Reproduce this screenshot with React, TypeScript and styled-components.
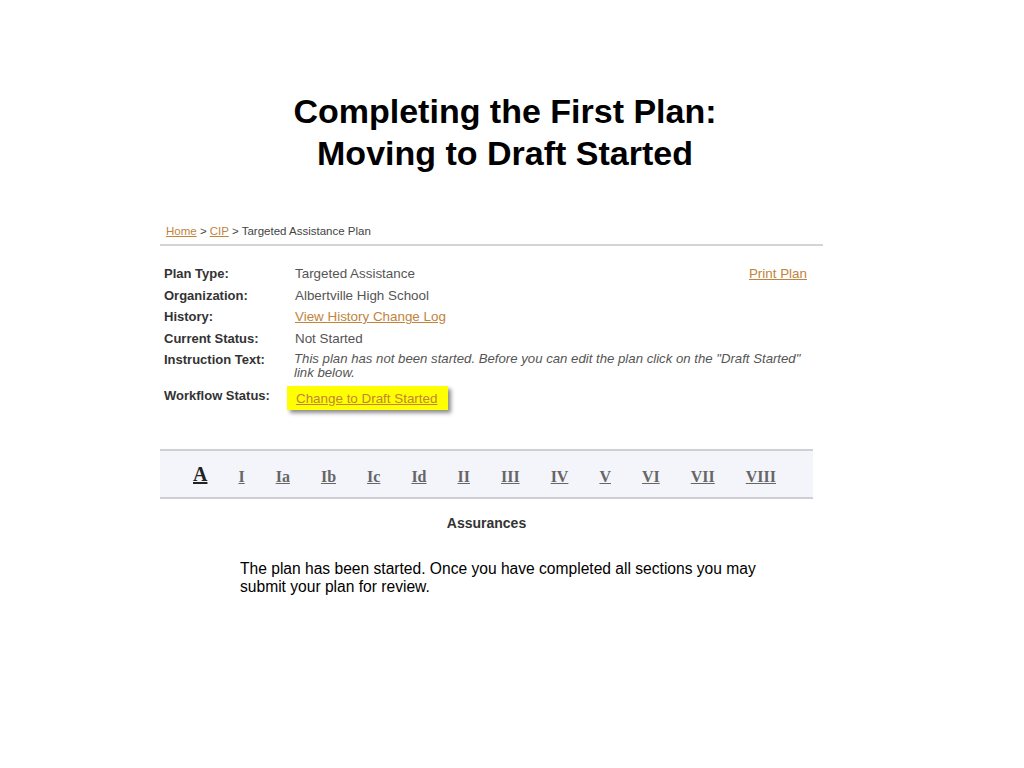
import React from "react";
import styled, { createGlobalStyle } from "styled-components";

const GlobalStyle = createGlobalStyle`
  html, body {
    margin: 0;
    padding: 0;
    background: #ffffff;
  }
  body {
    font-family: "Liberation Sans", Arial, sans-serif;
  }
`;

const Page = styled.div`
  width: 1024px;
  height: 768px;
  display: flex;
  flex-direction: column;
  background: #fff;
`;

const Title = styled.h1`
  margin: 90px 14px 0 0;
  font-size: 34px;
  line-height: 42px;
  font-weight: 700;
  text-align: center;
  color: #000;
`;

const Shot = styled.div`
  margin: 49px 0 0 160px;
  width: 663px;
  display: flex;
  flex-direction: column;
  font-family: "Liberation Sans", Arial, sans-serif;
`;

const Crumbs = styled.div`
  padding-left: 6px;
  font-size: 11.5px;
  line-height: 16px;
  color: #444;
`;

const Link = styled.a`
  color: #c0843c;
  text-decoration: underline;
  cursor: pointer;
`;

const Divider = styled.hr`
  margin: 5px 0 0;
  border: 0;
  border-top: 2px solid #d4d4d4;
`;

const Details = styled.div`
  padding: 17px 16px 0 4px;
  display: flex;
  flex-direction: column;
`;

const Row = styled.div`
  display: flex;
  align-items: flex-start;
  min-height: 21.5px;
`;

const Label = styled.div<{ $lh?: number }>`
  width: 131px;
  flex-shrink: 0;
  font-size: 13px;
  font-weight: 700;
  line-height: ${(p) => p.$lh ?? 21.5}px;
  color: #333;
`;

const Value = styled.div`
  flex: 1;
  font-size: 13.4px;
  line-height: 21.5px;
  color: #555;
`;

const Italic = styled.div`
  flex: 1;
  margin: 0 -8px 0 -1px;
  padding: 3px 0 4px;
  font-size: 13.2px;
  line-height: 14px;
  font-style: italic;
  color: #555;
`;

const Print = styled(Link)`
  font-size: 13.4px;
  line-height: 21.5px;
`;

const Highlight = styled.div`
  margin: 2px 0 0 -8px;
  padding: 0 11px 0 9px;
  height: 24px;
  display: flex;
  align-items: center;
  background: #ffff00;
  box-shadow: 3px 3px 4px rgba(0, 0, 0, 0.45);
  font-size: 13.4px;
`;

const Tabs = styled.nav`
  margin-top: 39px;
  width: 653px;
  height: 50px;
  box-sizing: border-box;
  padding: 5px 0 0 33px;
  display: flex;
  align-items: center;
  gap: 31px;
  background: #f4f4fb;
  border-top: 2px solid #d0d0d4;
  border-bottom: 2px solid #d0d0d4;
`;

const Tab = styled.a<{ $main?: boolean }>`
  font-family: "Liberation Serif", "Times New Roman", serif;
  font-weight: 700;
  font-size: ${(p) => (p.$main ? 20 : 16)}px;
  color: ${(p) => (p.$main ? "#222" : "#666")};
  text-decoration: underline;
  margin-top: ${(p) => (p.$main ? -4 : 0)}px;
  cursor: pointer;
`;

const Section = styled.div`
  width: 653px;
  margin-top: 15px;
  text-align: center;
  font-size: 14px;
  font-weight: 700;
  line-height: 18px;
  color: #333;
`;

const Note = styled.p`
  margin: 28px 0 0 240px;
  width: 530px;
  font-size: 15.6px;
  line-height: 18px;
  color: #000;
`;

const tabs = ["I", "Ia", "Ib", "Ic", "Id", "II", "III", "IV", "V", "VI", "VII", "VIII"];

export default function App() {
  return (
    <Page>
      <GlobalStyle />
      <Title>
        Completing the First Plan:
        <br />
        Moving to Draft Started
      </Title>
      <Shot>
        <Crumbs>
          <Link>Home</Link> &gt; <Link>CIP</Link> &gt; Targeted Assistance Plan
        </Crumbs>
        <Divider />
        <Details>
          <Row>
            <Label>Plan Type:</Label>
            <Value>Targeted Assistance</Value>
            <Print>Print Plan</Print>
          </Row>
          <Row>
            <Label>Organization:</Label>
            <Value>Albertville High School</Value>
          </Row>
          <Row>
            <Label>History:</Label>
            <Value>
              <Link>View History Change Log</Link>
            </Value>
          </Row>
          <Row>
            <Label>Current Status:</Label>
            <Value>Not Started</Value>
          </Row>
          <Row>
            <Label>Instruction Text:</Label>
            <Italic>
              This plan has not been started. Before you can edit the plan click on the "Draft Started"
              link below.
            </Italic>
          </Row>
          <Row>
            <Label $lh={24}>Workflow Status:</Label>
            <Highlight>
              <Link>Change to Draft Started</Link>
            </Highlight>
          </Row>
        </Details>
        <Tabs>
          <Tab $main>A</Tab>
          {tabs.map((t) => (
            <Tab key={t}>{t}</Tab>
          ))}
        </Tabs>
        <Section>Assurances</Section>
      </Shot>
      <Note>
        The plan has been started. Once you have completed all sections you may submit your plan for review.
      </Note>
    </Page>
  );
}
